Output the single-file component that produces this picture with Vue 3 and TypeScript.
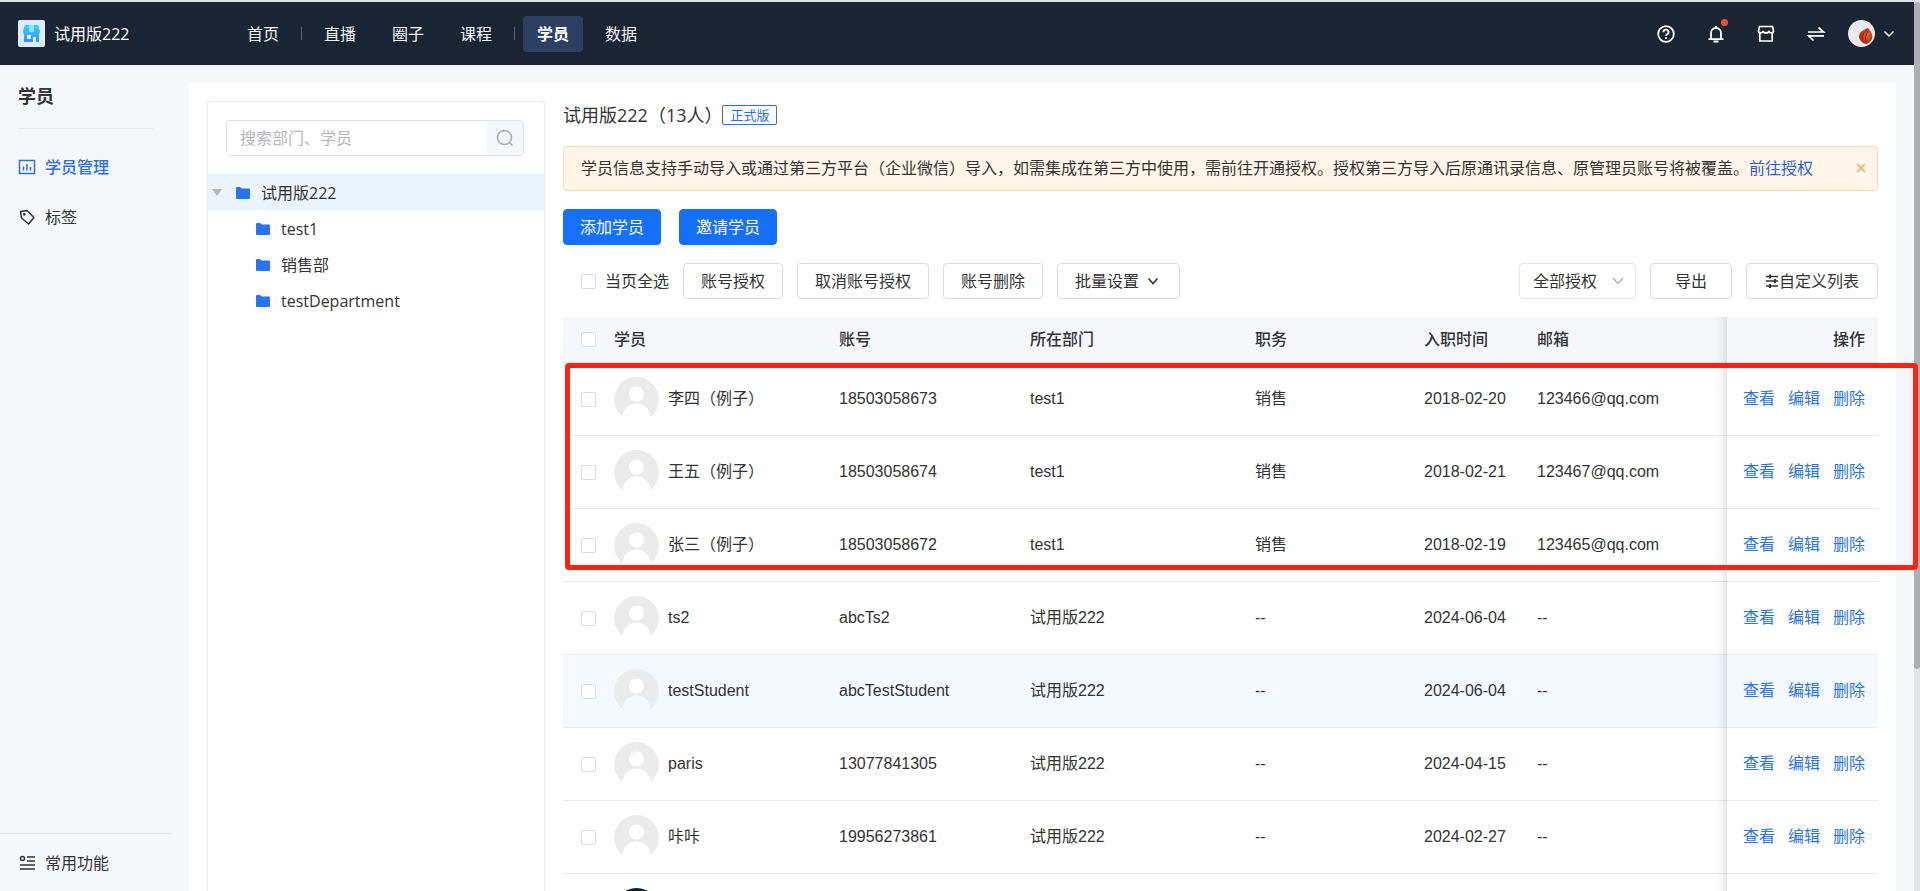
<script setup lang="ts">
import { ref } from 'vue'

interface Member {
  name: string
  account: string
  dept: string
  job: string
  date: string
  email: string
  photo?: boolean
}

const nav = [
  { label: '首页', divider: true },
  { label: '直播' },
  { label: '圈子' },
  { label: '课程', divider: true },
  { label: '学员', active: true },
  { label: '数据' },
]

const departments = ['test1', '销售部', 'testDepartment']

const members: Member[] = [
  { name: '李四（例子）', account: '18503058673', dept: 'test1', job: '销售', date: '2018-02-20', email: '123466@qq.com' },
  { name: '王五（例子）', account: '18503058674', dept: 'test1', job: '销售', date: '2018-02-21', email: '123467@qq.com' },
  { name: '张三（例子）', account: '18503058672', dept: 'test1', job: '销售', date: '2018-02-19', email: '123465@qq.com' },
  { name: 'ts2', account: 'abcTs2', dept: '试用版222', job: '--', date: '2024-06-04', email: '--' },
  { name: 'testStudent', account: 'abcTestStudent', dept: '试用版222', job: '--', date: '2024-06-04', email: '--' },
  { name: 'paris', account: '13077841305', dept: '试用版222', job: '--', date: '2024-04-15', email: '--' },
  { name: '咔咔', account: '19956273861', dept: '试用版222', job: '--', date: '2024-02-27', email: '--' },
  { name: '', account: '', dept: '', job: '', date: '', email: '', photo: true },
]

const highlighted = 4
const actions = ['查看', '编辑', '删除']
const keyword = ref('')
const authFilter = ref('all')
</script>

<template>
  <div class="page">
    <div class="app">
      <header class="topbar">
        <div class="brand">
          <svg class="logo" viewBox="0 0 27 27" aria-hidden="true">
            <defs>
              <linearGradient id="shop" x1="0" y1="0" x2="0" y2="1">
                <stop offset="0" stop-color="#35d3fb" />
                <stop offset="1" stop-color="#3b8bf5" />
              </linearGradient>
            </defs>
            <rect width="27" height="27" rx="2" fill="#dcebfd" />
            <path d="M7 5h13l2 6c0 2-1 3-1 3v8H6v-8s-1-1-1-3z" fill="url(#shop)" />
            <path d="M11 5h5v5a2.500 2.500 0 0 1-5 0z" fill="#8aeaff" />
            <rect x="9" y="15" width="4" height="4" fill="#e4f3ff" />
            <rect x="15" y="17" width="3" height="5" fill="#e4f3ff" />
          </svg>
          <span>试用版222</span>
        </div>
        <nav class="nav">
          <template v-for="item in nav" :key="item.label">
            <a href="#" class="nav-item" :class="{ active: item.active }">{{ item.label }}</a>
            <span v-if="item.divider" class="nav-divider"></span>
          </template>
        </nav>
        <div class="tools">
          <button class="tool" aria-label="帮助">
            <svg viewBox="0 0 20 20" width="20" height="20" fill="none" stroke="#fff" stroke-width="1.800">
              <circle cx="10" cy="10" r="7.800" />
              <path d="M7.500 8.300a2.500 2.500 0 1 1 3.600 2.100c-.8.4-1.100.8-1.100 1.700" />
              <path d="M10 13.300v1.800" />
            </svg>
          </button>
          <button class="tool" aria-label="通知">
            <svg viewBox="0 0 20 20" width="20" height="20" fill="none" stroke="#fff" stroke-width="1.800">
              <path d="M5 15V9a5 5 0 0 1 10 0v6M2.500 15.200h15M10 2v2M7.500 17.500h5" />
            </svg>
            <i class="dot"></i>
          </button>
          <button class="tool" aria-label="店铺">
            <svg viewBox="0 0 20 20" width="20" height="20" fill="none" stroke="#fff" stroke-width="1.700">
              <path d="M3.800 8.500V17h12.400V8.500M3.500 2.500h13l1 4.500c0 2.500-4 2.500-4.500 0-.5 2.500-5.500 2.500-6 0-.5 2.500-4.500 2.500-4.500 0z" />
            </svg>
          </button>
          <button class="tool" aria-label="切换">
            <svg viewBox="0 0 20 20" width="20" height="20" fill="none" stroke="#fff" stroke-width="1.700">
              <path d="M2 8h15.500L12.500 3.500M18 11.800H2.500l5 4.700" />
            </svg>
          </button>
          <button class="user" aria-label="账户">
            <svg viewBox="0 0 27 27" width="27" height="27">
              <defs>
                <radialGradient id="petal" cx=".6" cy=".45" r=".6">
                  <stop offset="0" stop-color="#e8692c" />
                  <stop offset="1" stop-color="#a92508" />
                </radialGradient>
              </defs>
              <circle cx="13.500" cy="13.500" r="13.500" fill="#e9e9ea" />
              <path d="M11 17c0-5 4-7 9-9 3 3 5 7 4 11-1 2-3 4-5 5-4 0-7-3-8-7z" fill="url(#petal)" />
              <path d="M14 19c0-4 2-7 5-9M18 22c-1-4 0-8 2-11" fill="none" stroke="#8f1c05" />
            </svg>
            <svg viewBox="0 0 10 6" width="10" height="6" fill="none" stroke="#fff" stroke-width="1.400">
              <path d="M.5.500 5 5 9.500.500" />
            </svg>
          </button>
        </div>
      </header>

      <div class="body">
        <aside class="sidebar">
          <h2 class="side-title">学员</h2>
          <a href="#" class="side-item current">
            <svg viewBox="0 0 18 18" width="18" height="18" fill="none" stroke="currentColor" stroke-width="1.500">
              <rect x="1.500" y="2.500" width="15" height="13" />
              <path d="M5.500 12.500V8.500M9 12.500V6M12.500 12.500V9" />
            </svg>
            学员管理
          </a>
          <a href="#" class="side-item">
            <svg viewBox="0 0 18 18" width="18" height="18" fill="none" stroke="currentColor" stroke-width="1.500" stroke-linejoin="round">
              <path d="M2.500 3.500 9 2.500l7 7-5.500 6.500-7-6z" />
              <circle cx="6.300" cy="6.300" r=".6" fill="currentColor" />
            </svg>
            标签
          </a>
          <a href="#" class="side-item side-bottom">
            <svg viewBox="0 0 18 18" width="18" height="18" fill="none" stroke="currentColor" stroke-width="1.500">
              <circle cx="4.500" cy="4.500" r="2" />
              <path d="M9 3h8M9 7h8M2 11h15M2 15h15" />
            </svg>
            常用功能
          </a>
        </aside>

        <main class="card">
          <section class="tree">
            <div class="search">
              <input v-model="keyword" type="text" placeholder="搜索部门、学员" aria-label="搜索部门、学员" />
              <button aria-label="搜索">
                <svg viewBox="0 0 18 18" width="18" height="18" fill="none" stroke="#a9abb0" stroke-width="1.500">
                  <circle cx="8.500" cy="8.500" r="7" />
                  <path d="m13.500 13.500 3 3" />
                </svg>
              </button>
            </div>
            <ul class="nodes">
              <li class="node root">
                <svg class="caret" viewBox="0 0 10 7" width="10" height="7"><path d="M0 0h10L5 7z" fill="#b4b7bd" /></svg>
                <svg class="folder" viewBox="0 0 14 12" width="14" height="12"><path d="M0 1a1 1 0 0 1 1-1h3l2 1.500h7a1 1 0 0 1 1 1V11a1 1 0 0 1-1 1H1a1 1 0 0 1-1-1z" fill="#2873ee" /></svg>
                试用版222
              </li>
              <li v-for="d in departments" :key="d" class="node child">
                <svg class="folder" viewBox="0 0 14 12" width="14" height="12"><path d="M0 1a1 1 0 0 1 1-1h3l2 1.500h7a1 1 0 0 1 1 1V11a1 1 0 0 1-1 1H1a1 1 0 0 1-1-1z" fill="#2873ee" /></svg>
                {{ d }}
              </li>
            </ul>
          </section>

          <section class="content">
            <div class="heading">
              <h1>试用版222（13人）</h1>
              <span class="tag">正式版</span>
            </div>

            <div class="notice">
              <p>学员信息支持手动导入或通过第三方平台（企业微信）导入，如需集成在第三方中使用，需前往开通授权。授权第三方导入后原通讯录信息、原管理员账号将被覆盖。<a href="#">前往授权</a></p>
              <button aria-label="关闭">
                <svg viewBox="0 0 10 10" width="10" height="10" stroke="#f0a35c" stroke-width="1.300"><path d="m1 1 8 8M9 1 1 9" /></svg>
              </button>
            </div>

            <div class="primary-row">
              <button class="btn primary">添加学员</button>
              <button class="btn primary">邀请学员</button>
            </div>

            <div class="toolbar">
              <label class="select-page"><input type="checkbox" class="check" />当页全选</label>
              <button class="btn">账号授权</button>
              <button class="btn">取消账号授权</button>
              <button class="btn">账号删除</button>
              <button class="btn batch">
                批量设置
                <svg viewBox="0 0 12 8" width="12" height="8" fill="none" stroke="#333" stroke-width="1.600"><path d="m1.500 1.500 4.500 5 4.500-5" /></svg>
              </button>
              <span class="spacer"></span>
              <span class="filter">
                <select v-model="authFilter" aria-label="授权状态">
                  <option value="all">全部授权</option>
                </select>
                <svg viewBox="0 0 12 8" width="12" height="8" fill="none" stroke="#aeb0b5" stroke-width="1.500"><path d="m1 1 5 5.500L11 1" /></svg>
              </span>
              <button class="btn export">导出</button>
              <button class="btn columns">
                <svg viewBox="0 0 14 14" width="14" height="14" fill="none" stroke="#333" stroke-width="1.400">
                  <path d="M1 2.500h12M1 7h12M1 12h12" />
                  <path d="M5 .5v4M10 5v4M5 10v4" stroke-width="2" />
                </svg>自定义列表
              </button>
            </div>

            <div class="table-wrap">
              <table>
                <colgroup>
                  <col class="c-check" /><col class="c-name" /><col class="c-account" /><col class="c-dept" />
                  <col class="c-job" /><col class="c-date" /><col /><col class="c-ops" />
                </colgroup>
                <thead>
                  <tr>
                    <th class="check-cell"><input type="checkbox" class="check" aria-label="全选" /></th>
                    <th>学员</th>
                    <th>账号</th>
                    <th>所在部门</th>
                    <th>职务</th>
                    <th>入职时间</th>
                    <th>邮箱</th>
                    <th class="ops">操作</th>
                  </tr>
                </thead>
                <tbody>
                  <tr v-for="(m, i) in members" :key="i" :class="{ hovered: i === highlighted }">
                    <td class="check-cell"><input type="checkbox" class="check" :aria-label="m.name" /></td>
                    <td>
                      <div class="person">
                        <svg v-if="m.photo" viewBox="0 0 45 45" width="45" height="45">
                          <circle cx="22.500" cy="22.500" r="22.500" fill="#101c33" />
                        </svg>
                        <svg v-else viewBox="0 0 45 45" width="45" height="45">
                          <path d="M22.500 0a22.500 22.500 0 0 1 14 40C36 32 30 26.500 22.500 26.500S9 32 8.500 40A22.500 22.500 0 0 1 22.500 0z" fill="#ebebeb" />
                          <circle cx="22.500" cy="17" r="7.500" fill="#fff" />
                        </svg>
                        {{ m.name }}
                      </div>
                    </td>
                    <td>{{ m.account }}</td>
                    <td>{{ m.dept }}</td>
                    <td>{{ m.job }}</td>
                    <td>{{ m.date }}</td>
                    <td>{{ m.email }}</td>
                    <td class="ops">
                      <div v-if="m.name" class="links"><a v-for="a in actions" :key="a" href="#">{{ a }}</a></div>
                    </td>
                  </tr>
                </tbody>
              </table>
              <div class="marker"></div>
            </div>
          </section>
        </main>
      </div>
    </div>
    <div class="scrollbar"><div class="thumb"></div></div>
  </div>
</template>

<style>
body {
  margin: 0;
}
</style>

<style scoped>
* {
  box-sizing: border-box;
}
.page {
  display: grid;
  grid-template-columns: minmax(0, 1fr) 6px;
  grid-template-rows: minmax(0, 1fr);
  height: 100vh;
  overflow: hidden;
  border-top: 2px solid #dfe3e1;
  background: #f5f7fb;
  color: #333;
  font-family: "Open Sans", "Noto Sans CJK SC", sans-serif;
  font-size: 16px;
  line-height: 24px;
}
a {
  color: inherit;
  text-decoration: none;
}
button,
input,
select {
  font: inherit;
  color: inherit;
}
button {
  padding: 0;
  border: 0;
  background: none;
}
svg {
  flex: none;
  display: block;
}
h1,
h2,
p,
ul {
  margin: 0;
  padding: 0;
}
.app {
  display: flex;
  flex-direction: column;
  min-height: 0;
}
.topbar {
  flex: none;
  display: flex;
  align-items: center;
  height: 63px;
  padding: 0 20px 0 18px;
  background: #1c2534;
  color: #fff;
}
.brand {
  display: flex;
  align-items: center;
  gap: 9px;
  width: 215px;
}
.logo {
  width: 27px;
  height: 27px;
}
.nav {
  display: flex;
  align-items: center;
  gap: 8px;
  color: #f0f1f3;
}
.nav-item {
  padding: 6px 14px;
  border-radius: 4px;
}
.nav-item.active {
  background: #2c4061;
  color: #fff;
  font-weight: 700;
}
.nav-divider {
  width: 1px;
  height: 13px;
  background: #5b6472;
}
.tools {
  display: flex;
  align-items: center;
  gap: 30px;
  margin-left: auto;
}
.tool {
  position: relative;
}
.dot {
  position: absolute;
  top: -5px;
  right: -2px;
  width: 7px;
  height: 7px;
  border-radius: 50%;
  background: #fb4747;
}
.user {
  display: flex;
  align-items: center;
  gap: 9px;
  margin-left: -8px;
}
.body {
  flex: 1;
  display: flex;
  min-height: 0;
}
.sidebar {
  display: flex;
  flex-direction: column;
  flex: none;
  width: 189px;
}
.side-title {
  margin: 0 36px 13px 18px;
  padding: 19px 0;
  border-bottom: 1px solid #e6e8ec;
  font-size: 18px;
  line-height: 25px;
}
.side-item {
  display: flex;
  align-items: center;
  gap: 9px;
  height: 50px;
  padding-left: 18px;
}
.side-item.current {
  color: #2a6fe8;
  font-weight: 500;
}
.side-bottom {
  height: 58px;
  margin: auto 18px 0 0;
  border-top: 1px solid #e6e8ec;
}
.card {
  flex: 1;
  display: flex;
  gap: 18px;
  min-width: 0;
  margin: 18px 18px 0 0;
  padding: 18px 18px 0;
  background: #fff;
}
.tree {
  flex: none;
  width: 338px;
  padding-top: 18px;
  border: 1px solid #e8e9ec;
  border-bottom: 0;
  border-radius: 4px 4px 0 0;
}
.search {
  display: flex;
  height: 36px;
  margin: 0 20px 18px 18px;
  border: 1px solid #e0e1e4;
  border-radius: 4px;
  overflow: hidden;
}
.search input {
  flex: 1;
  min-width: 0;
  padding: 0 13px;
  border: 0;
  outline: 0;
}
.search input::placeholder {
  color: #b3b5ba;
}
.search button {
  display: grid;
  place-items: center;
  width: 36px;
  background: #f5f6fa;
}
.nodes {
  list-style: none;
}
.node {
  display: flex;
  align-items: center;
  height: 36px;
  padding-top: 1px;
}
.root {
  padding-left: 4px;
  background: #eaf3ff;
}
.caret {
  margin-right: 14px;
}
.folder {
  margin-right: 11px;
}
.child {
  padding-left: 48px;
}
.content {
  flex: 1;
  display: flex;
  flex-direction: column;
  gap: 18px;
  min-width: 0;
}
.content > * {
  flex: none;
}
.heading {
  display: flex;
  align-items: center;
  height: 27px;
}
.heading h1 {
  font-size: 18px;
  font-weight: 400;
}
.tag {
  padding: 0 7px;
  border: 1px solid #2a6fe8;
  border-radius: 2px;
  color: #2a6fe8;
  font-size: 13px;
  line-height: 18px;
}
.notice {
  display: flex;
  align-items: center;
  justify-content: space-between;
  min-height: 45px;
  padding: 0 11px 2px 17px;
  border: 1px solid #f8d8a8;
  border-radius: 4px;
  background: #fff5e9;
}
.notice a {
  color: #2a5fd8;
}
.primary-row {
  display: flex;
  gap: 18px;
}
.btn {
  flex: none;
  display: inline-flex;
  align-items: center;
  height: 36px;
  padding: 0 17px;
  border: 1px solid #dadbdf;
  border-radius: 4px;
  background: #fff;
  white-space: nowrap;
}
.btn.primary {
  padding: 0 16px;
  border-color: #1670ff;
  background: #1670ff;
  color: #fff;
}
.toolbar {
  display: flex;
  align-items: center;
  gap: 14px;
}
.select-page {
  display: flex;
  align-items: center;
  gap: 9px;
  padding-left: 18px;
}
.check {
  appearance: none;
  display: block;
  width: 15px;
  height: 15px;
  margin: 0;
  border: 1px solid #dadce0;
  border-radius: 2px;
  background: #fff;
}
.batch {
  gap: 8px;
  padding-right: 20px;
}
.spacer {
  flex: 1;
}
.filter {
  display: grid;
  align-items: center;
  width: 117px;
}
.filter > * {
  grid-area: 1 / 1;
}
.filter select {
  appearance: none;
  height: 36px;
  padding: 0 13px;
  border: 1px solid #e4e5e8;
  border-radius: 4px;
  background: #fff;
}
.filter svg {
  justify-self: end;
  margin-right: 12px;
  pointer-events: none;
}
.export {
  padding: 0 24px;
}
.columns {
  padding: 0 18px;
}
.table-wrap {
  position: relative;
}
table {
  width: 100%;
  border-collapse: separate;
  border-spacing: 0;
  table-layout: fixed;
  font-family: "Liberation Sans", "Noto Sans CJK SC", sans-serif;
}
.c-check {
  width: 51px;
}
.c-name,
.c-dept {
  width: 225px;
}
.c-account {
  width: 191px;
}
.c-job {
  width: 169px;
}
.c-date {
  width: 113px;
}
.c-ops {
  width: 151px;
}
th,
td {
  padding: 0;
  border-bottom: 1px solid #e9eaed;
  text-align: left;
}
th {
  height: 46px;
  background: #f5f7fb;
  font-weight: 500;
}
td {
  height: 73px;
}
.hovered td {
  background: #f4f8ff;
}
.check-cell {
  padding-left: 18px;
}
.person {
  display: flex;
  align-items: center;
  gap: 9px;
}
.ops {
  position: relative;
  padding-right: 13px;
  text-align: right;
}
.ops::before {
  content: "";
  position: absolute;
  top: 0;
  bottom: -1px;
  right: 100%;
  width: 12px;
  background: linear-gradient(to left, rgba(0, 0, 0, 0.1), rgba(0, 0, 0, 0.03) 50%, rgba(0, 0, 0, 0));
}
.links {
  display: flex;
  justify-content: flex-end;
  gap: 13px;
  color: #2a74e8;
}
.marker {
  position: absolute;
  z-index: 2;
  top: 46px;
  left: 2px;
  right: -40px;
  height: 207px;
  border: 5px solid #fa2314;
  border-radius: 4px;
}
.scrollbar {
  background: #e2e3e6;
}
.thumb {
  height: 75%;
  border-radius: 3px;
  background: #adaeb2;
}
</style>
